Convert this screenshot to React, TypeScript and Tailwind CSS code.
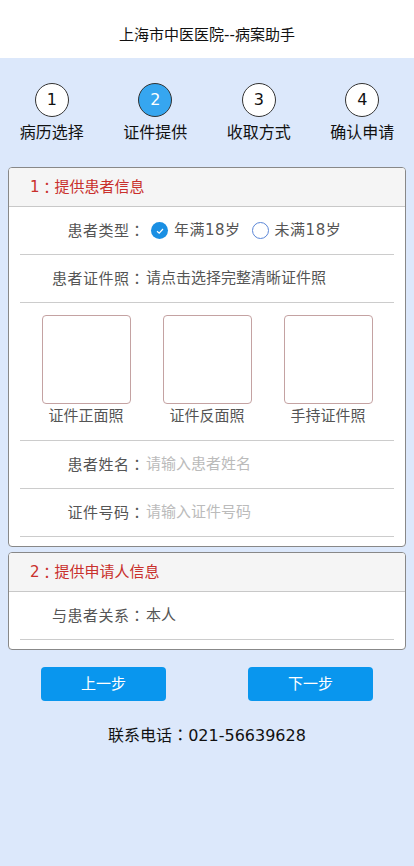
import React from 'react'

const FONT = { fontFamily: '"DejaVu Sans", "Noto Sans CJK SC", sans-serif' }

const STEPS = ['病历选择', '证件提供', '收取方式', '确认申请']

// SC 字体的全角冒号靠左，这里换成居中的 TC 字形
function C() {
  return <span style={{ fontFamily: '"Noto Sans CJK TC", sans-serif' }}>：</span>
}

function Steps({ active }: { active: number }) {
  return (
    <div className="grid grid-cols-4 pt-[25px]">
      {STEPS.map((s, i) => (
        <div key={s} className="flex flex-col items-center">
          <div
            className={`w-[34px] h-[34px] rounded-full border border-[#333] flex items-center justify-center text-[16px] ${
              i + 1 === active ? 'bg-[#36a6f0] text-white' : 'bg-white text-[#111]'
            }`}
          >
            {i + 1}
          </div>
          <div className="mt-[6px] text-[16px] leading-[20px] text-[#111]">{s}</div>
        </div>
      ))}
    </div>
  )
}

function Card({ num, title, children }: { num: number; title: string; children: React.ReactNode }) {
  return (
    <div className="mx-[8px] rounded-[4px] border border-[#888] bg-white overflow-hidden">
      <div className="h-[39px] bg-[#f5f5f5] border-b border-[#c8c8c8] flex items-center pl-[21px] text-[15px] leading-[20px] text-[#c9302c]">
        {num}
        <C />
        {title}
      </div>
      <div className="px-[11px]">{children}</div>
    </div>
  )
}

function Row({ label, children }: { label: string; children?: React.ReactNode }) {
  return (
    <div className="h-[48px] border-b border-[#ccc] flex items-center text-[15px]">
      <span className="w-[125px] text-right text-[#555] shrink-0 tracking-[0.5px]">
        {label}
        <C />
      </span>
      {children}
    </div>
  )
}

function Radio({ checked, label }: { checked?: boolean; label: string }) {
  return (
    <label className="flex items-center gap-[6px] text-[#555]">
      {checked ? (
        <span className="w-[17px] h-[17px] rounded-full bg-[#1a8fe3] flex items-center justify-center">
          <svg width="10" height="10" viewBox="0 0 10 10" fill="none">
            <path d="M2 5.2 L4.2 7.2 L8 3" stroke="white" strokeWidth="1.2" />
          </svg>
        </span>
      ) : (
        <span className="w-[17px] h-[17px] rounded-full border border-[#5b86d6] bg-white" />
      )}
      <span className="tracking-[0.5px]">{label}</span>
    </label>
  )
}

export default function App() {
  return (
    <div className="min-h-[866px] bg-[#dce8fb]" style={FONT}>
      <div className="h-[58px] bg-white pt-[24px] text-center text-[15px] leading-[22px] text-[#111]">
        上海市中医医院--病案助手
      </div>

      <Steps active={2} />

      <div className="mt-[24px]">
        <Card num={1} title="提供患者信息">
          <Row label="患者类型">
            <div className="flex items-center gap-[11px] ml-[6px]">
              <Radio checked label="年满18岁" />
              <Radio label="未满18岁" />
            </div>
          </Row>
          <Row label="患者证件照">
            <span className="text-[#555] ml-[1px]">请点击选择完整清晰证件照</span>
          </Row>
          <div className="border-b border-[#ccc] pt-[12px] pb-[13px] flex justify-center gap-[32px]">
            {['证件正面照', '证件反面照', '手持证件照'].map((t) => (
              <div key={t} className="flex flex-col items-center">
                <div className="w-[89px] h-[89px] rounded-[4px] border border-[#c4a2a2] bg-white" />
                <div className="text-[15px] leading-[22px] text-[#555] mt-[1px]">{t}</div>
              </div>
            ))}
          </div>
          <Row label="患者姓名">
            <input
              className="ml-[1px] outline-none bg-transparent placeholder-[#bbb] text-[15px] w-[220px]"
              placeholder="请输入患者姓名"
            />
          </Row>
          <Row label="证件号码">
            <input
              className="ml-[1px] outline-none bg-transparent placeholder-[#bbb] text-[15px] w-[220px]"
              placeholder="请输入证件号码"
            />
          </Row>
          <div className="h-[9px]" />
        </Card>
      </div>

      <div className="mt-[5px]">
        <Card num={2} title="提供申请人信息">
          <Row label="与患者关系">
            <span className="text-[#555] ml-[1px]">本人</span>
          </Row>
          <div className="h-[9px]" />
        </Card>
      </div>

      <div className="mt-[17px] flex justify-center gap-[82px]">
        <button className="w-[125px] h-[34px] rounded-[4px] bg-[#0996ee] text-white text-[15px]">上一步</button>
        <button className="w-[125px] h-[34px] rounded-[4px] bg-[#0996ee] text-white text-[15px]">下一步</button>
      </div>

      <div className="mt-[21px] text-center text-[16px] leading-[24px] text-[#111]">
        联系电话
        <C />
        021-56639628
      </div>
    </div>
  )
}
